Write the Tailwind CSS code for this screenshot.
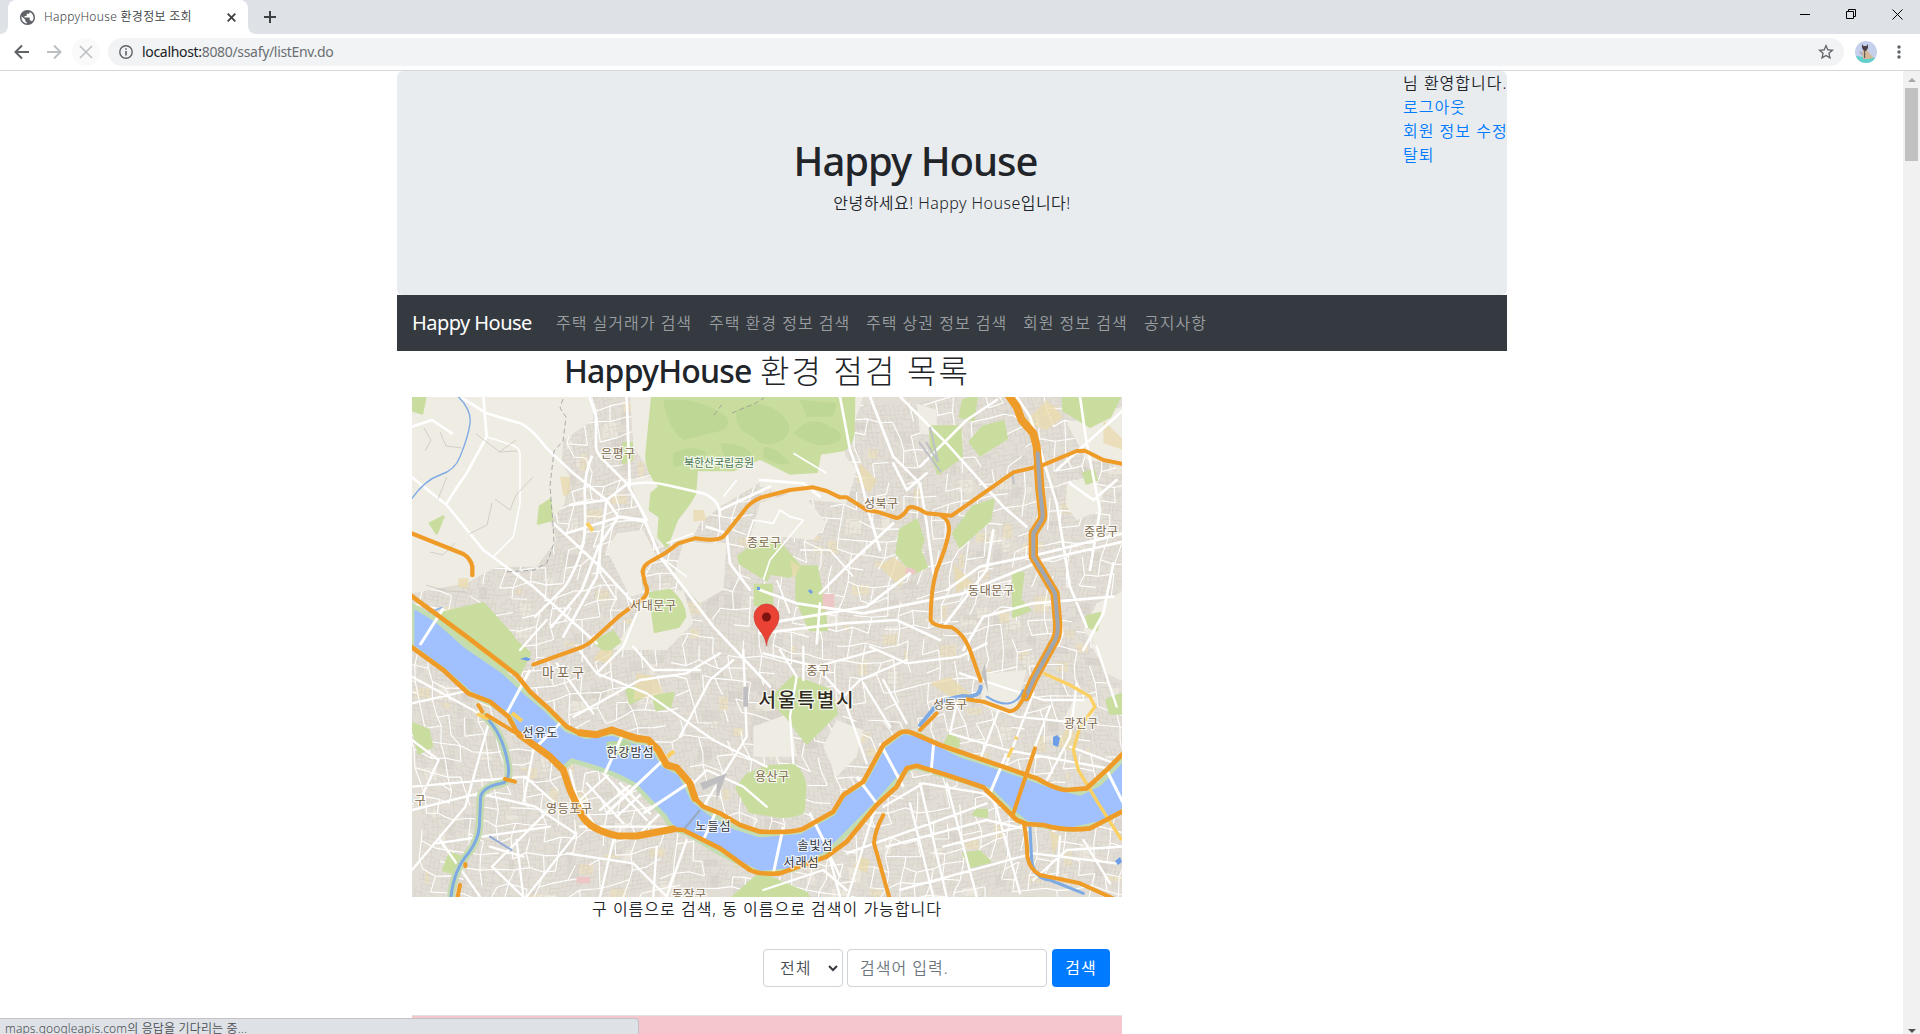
<!DOCTYPE html>
<html lang="ko">
<head>
<meta charset="utf-8">
<title>HappyHouse 환경정보 조회</title>
<script src="https://cdn.jsdelivr.net/npm/@tailwindcss/browser@4"></script>
</head>
<body class="bg-white">
<div class="h-[1034px] w-[1920px] overflow-hidden bg-white font-['Noto_Sans','Noto_Sans_CJK_KR',sans-serif] text-[#212529] flex flex-col relative">

<header class="shrink-0">
  <div class="flex h-[34px] bg-[#dee1e6]">
    <div class="relative ml-2 flex h-[34px] w-60 items-center rounded-t-lg bg-white pl-3 pr-3">
      <svg class="absolute -left-2 bottom-0" width="8" height="8"><path d="M8 0v8H0a8 8 0 0 0 8-8z" fill="#fff"/></svg>
      <svg class="absolute -right-2 bottom-0" width="8" height="8"><path d="M0 0v8h8a8 8 0 0 1-8-8z" fill="#fff"/></svg>
      <svg class="shrink-0" width="15" height="15" viewBox="2 2 20 20"><path fill="#5f6368" d="M12 2C6.48 2 2 6.48 2 12s4.48 10 10 10 10-4.48 10-10S17.52 2 12 2zm-1 17.93c-3.95-.49-7-3.85-7-7.93 0-.62.08-1.21.21-1.79L9 15v1c0 1.100.9 2 2 2v1.930zm6.900-2.540c-.26-.81-1-1.390-1.900-1.390h-1v-3c0-.55-.45-1-1-1H8v-2h2c.55 0 1-.45 1-1V7h2c1.100 0 2-.9 2-2v-.41c2.930 1.190 5 4.060 5 7.410 0 2.080-.8 3.970-2.100 5.390z"/></svg>
      <span class="ml-[9px] whitespace-nowrap text-xs font-[350] tracking-[0.3px] text-[#3c4043]">HappyHouse 환경정보 조회</span>
      <svg class="ml-auto" width="9" height="9" viewBox="0 0 9 9"><path d="M.7.7l7.600 7.600M8.300.7L.7 8.300" stroke="#3c4043" stroke-width="1.800"/></svg>
    </div>
    <svg class="ml-4 mt-[11px]" width="12" height="12"><path d="M6 0v12M0 6h12" stroke="#3c4043" stroke-width="2"/></svg>
    <div class="ml-auto mr-[17px] flex h-7 items-center gap-9">
      <svg width="10" height="10"><path d="M0 5.500h10" stroke="#000"/></svg>
      <svg width="10" height="10" fill="none" stroke="#000"><path d="M.5 2.500h7v7h-7zM2.500 2.500v-2h7v7h-2"/></svg>
      <svg width="11" height="11"><path d="M.5.5l10 10M10.500.5l-10 10" stroke="#000"/></svg>
    </div>
  </div>
  <div class="flex h-[37px] items-center border-b border-[#d5d7da] pl-[14px] pr-[19px]">
    <svg width="16" height="16" fill="none" stroke="#5f6368" stroke-width="2"><path d="M15 8H2M8 1.500L1.500 8 8 14.500"/></svg>
    <svg class="ml-4" width="16" height="16" fill="none" stroke="#bdc0c3" stroke-width="2"><path d="M1 8h13M8 1.500L14.500 8 8 14.500"/></svg>
    <div class="ml-[10px] flex size-7 items-center justify-center rounded-full bg-[#fafafb]"><svg width="14" height="14"><path d="M1 1l12 12M13 1L1 13" stroke="#bdc0c3" stroke-width="1.700"/></svg></div>
    <div class="ml-2 flex h-7 flex-1 items-center rounded-full bg-[#f1f3f4] pl-[11px] pr-[10px]">
      <svg width="14" height="14" viewBox="0 0 14 14"><circle cx="7" cy="7" r="6.200" fill="none" stroke="#5f6368" stroke-width="1.400"/><path d="M7 6v4.500M7 3.300v1.500" stroke="#5f6368" stroke-width="1.600"/></svg>
      <span class="ml-[9px] text-sm tracking-[-0.32px] text-[#6b6f73]"><span class="text-[#202124]">localhost:</span>8080/ssafy/listEnv.do</span>
      <svg class="ml-auto" width="16" height="16" viewBox="2 2 20 20"><path fill="#5f6368" d="M22 9.240l-7.190-.62L12 2 9.190 8.630 2 9.240l5.460 4.730L5.820 21 12 17.270 18.180 21l-1.630-7.030L22 9.240zM12 15.400l-3.760 2.270 1-4.280-3.320-2.880 4.380-.38L12 6.100l1.710 4.040 4.380.38-3.320 2.880 1 4.280L12 15.400z"/></svg>
    </div>
    <svg class="ml-[11px]" width="22" height="22" viewBox="0 0 22 22"><defs><clipPath id="av"><circle cx="11" cy="11" r="11"/></clipPath></defs><g clip-path="url(#av)"><path fill="#c5d0ec" d="M0 0h22v22H0z"/><path fill="#62d0cd" d="M0 15l22 2v5H0z"/><path fill="#d5b998" d="M8 8l4 1 3 4 3 3 0 1-4 1H8z"/><path fill="#b7b1bd" d="M4 10l4 1v4l-3-2z"/><path fill="#4a4248" d="M7 3l1.500 2h3L13 3v4l-2 3H9L7 7z"/><path fill="#6b5a52" d="M9 9.500h1.200V17H9z"/></g></svg>
    <svg class="ml-5" width="4" height="14" fill="#5f6368"><circle cx="2" cy="2" r="1.700"/><circle cx="2" cy="7" r="1.700"/><circle cx="2" cy="12" r="1.700"/></svg>
  </div>
</header>

<div class="flex flex-1 min-h-0">
<main class="flex-1 overflow-hidden">
  <div class="ml-[397px] w-[1110px]">
    <section class="relative h-56 rounded-md bg-[#e9ecef] pt-[66px] text-center">
      <h1 class="-ml-[73px] text-[40px] font-medium leading-[48px] tracking-[-1px]">Happy House</h1>
      <p class="mt-[6px] text-base font-[350] leading-6 tracking-[0.45px]">안녕하세요! Happy House입니다!</p>
      <div class="absolute right-0 top-0 w-[104px] whitespace-nowrap text-left font-[350] leading-6 tracking-[1px] text-[#007bff]">
        <p class="text-[#212529]">님 환영합니다.</p><p>로그아웃</p><p>회원 정보 수정</p><p>탈퇴</p>
      </div>
    </section>
    <nav class="flex h-14 items-center whitespace-nowrap bg-[#343a40] pl-[15px] font-[350] tracking-[1px] text-[#9a9da0]">
      <a class="w-36 text-xl font-normal tracking-[-0.55px] text-white">Happy House</a>
      <a class="w-[153px]">주택 실거래가 검색</a><a class="w-[157px]">주택 환경 정보 검색</a><a class="w-[157px]">주택 상권 정보 검색</a><a class="w-[121px]">회원 정보 검색</a><a>공지사항</a>
    </nav>
    <section class="ml-[15px] w-[710px]">
      <h2 class="h-[46px] whitespace-nowrap text-center text-[32px] font-medium leading-10"><span class="tracking-[-0.8px]">HappyHouse</span> <span class="font-light tracking-[2.1px]">환경 점검 목록</span></h2>
      <svg id="map" width="710" height="500" viewBox="0 0 710 500" class="block overflow-hidden font-['Noto_Sans_CJK_KR']">
        <rect width="710" height="500" fill="#e2ded5"/>
        <g id="blocks"></g>
        <path id="lanes" fill="none" stroke="#d0cbc3" stroke-width=".5"/>
        <path id="streets" fill="none" stroke="#fff" stroke-width="1.100"/>
        <!-- open land -->
        <g transform="translate(-12 -7) scale(.33333)" fill="#efece4">
          <path d="M36 20H575L580 90 490 150 485 220 510 260 490 350 450 390 470 450 410 530 290 530 200 580 36 610z"/>
          <path d="M690 20H1110V260L960 350 900 400 880 440 780 470 730 390 690 270 760 260 700 170z"/>
          <path d="M650 430L730 420 770 500 720 540 730 610 690 620 620 480zM740 610L850 600 880 700 800 780H640L700 690zM850 460L980 460 970 600 900 640 820 560z"/>
          <path d="M1070 20H1390L1330 190 1370 240 1340 340 1230 330 1080 290zM1080 340L1200 300 1280 400 1240 450 1150 440 1090 530 1040 480z"/>
          <path d="M2000 280l60-20 50 40-10 60-70 30-30-40zM2090 640l90-40v180h-80l-50-60zM1550 40l60 20v80l-50-10zM2000 100l170-50v170l-110-10z"/>
          <path d="M1760 850l120-10-30 110-60 20-50-30zM2020 930l70-10-10 60-90 10zM1310 990l80 30-20 80-60 60-40-90zM1060 1010l110-40 20 130h-130zM2070 760h110v120l-60-30z"/>
        </g>
        <!-- parks -->
        <g transform="translate(-12 -7) scale(.33333)" fill="#c9dd9f" stroke="#c9dd9f" stroke-width="8" stroke-linejoin="round">
          <path d="M757 20H1362L1360 130Q1355 165 1330 180L1260 190 1250 245 1170 250 1080 205 1000 240 890 240 885 310Q875 330 860 350L830 390 800 470 775 440 780 380 750 360 755 310 780 290Q735 240 740 190z"/>
          <path d="M1015 500l65-50 60 10 60 70-30 30-60-10-10 20-80-50zM1065 585h50v60h-50zM1190 530l60 0 20 100 10 90-50 0-40-90zM1500 420l50-30 20 60-10 30 20 50-40 20-50-60zM1590 110l90 0 5 90-70 50-20-50zM1750 110l60-15 10 50-80 50-30-40zM1720 350l60-20-10 60-90 80-20-40zM1690 30l40-10-10 70-40-10zM1990 20h170l-30 60-60 30-80-50z"/>
          <path d="M750 610l60-10Q855 640 855 680L835 710 765 725zM580 755l60-30 20 30-40 30zM420 350l30-20 5 60-40 10zM80 680l170-40 90 100-60 60-80-30zM90 400l40-20-20 50zM36 20h40l-10 50-30-10zM1840 550l30 0-10 80 30 30-50 20zM2050 250l30-10 10 30-30 10zM2060 680l40-10-10 50-25-10zM670 160l25 0v50l-25 10z"/>
          <path d="M160 700l150 20 80 70-30 60-80-20zM1180 860l110 40 20 70-90 90-60-80-50-50zM1100 1130l80-5Q1215 1150 1215 1195L1210 1265Q1190 1280 1140 1280L1050 1265 1010 1195 1040 1155zM1650 1030l25 20v20l-40-10zM36 1000l50 20 10 50-40 20zM680 900l30-10 20 30-40 20zM760 920l60-10-10 40-40 10zM150 1390l30 10-20 50-30-10zM1000 1520l80-70 140 60 20 50H960zM1690 1390l50-5 30 30-60 15zM2120 930l50-20v60h-40zM1730 1260l30 0v20l-40-5z"/>
        </g>
        <g transform="translate(-12 -7) scale(.33333)" fill="#b8d38d" opacity=".6"><path d="M790 30Q900 20 980 80 1000 120 930 130L850 150Q800 110 790 30zM1010 60q70-40 130 10 50 40 10 80-60 30-90-10-60-20-50-80zM1180 130q50-60 110-20 40 10 30 40-60 40-140-20zM820 190q60-30 100 0l-20 30-80 10zM960 160q80 0 100 40l-80 20zM1090 170q40 0 80 50-40 10-80-20zM1200 30l110 10-10 40-80 0z"/></g>
        <g transform="translate(-12 -7) scale(.33333)" fill="#e9dbae" opacity=".75">
          <path d="M480 260l30 0v50l-20 10zM880 360l30 0 10 30-40 5zM1380 220l50 50-20 40-40-40zM1870 100l70-70 50 50-50 40zM2110 90l60 60v30l-60-20zM1480 500l50 40-30 50-60-60zM1660 520l60 60-50 30zM600 780l40 0-10 40-50-10zM710 850l60 10 20 50-90 20zM175 565l30 0v30l-30-5zM1380 1400l30 10-10 40-40-20zM1950 1320l30 20-20 60zM2000 1010l30 20-20 50-40-10zM1170 510l30 20-20 40zM1590 880l60-20 70 60-40 20z"/>
        </g>
        <path transform="translate(-12 -7) scale(.33333)" fill="#edc7c6" d="M1268 612h35v48h-35zM1520 530l30 10-10 15-25-5zM530 1460l40 0v20h-40z"/>
        <!-- arterial streets -->
        <g fill="none" stroke="#fff" stroke-linejoin="round" stroke-linecap="round">
          <g transform="translate(-12 -7) scale(.33333)" stroke-width="8">
            <path d="M36 262L140 345 250 480 400 590 590 760M180 20L260 70 360 100Q390 110 440 175L520 250 620 330 655 380 735 395 780 500 940 710 1110 890M568 20l20 60 0 90Q590 195 620 220L680 280 740 390M575 200Q550 260 555 330L555 420Q550 500 495 590L405 680M655 380l-60 90-50 130-90 110M680 285Q740 270 800 285L910 310Q960 330 960 375M510 345l110-15 70-55M460 400l140 130 110 120M500 430L660 380 735 390M36 110l60-20 60 40M250 20l10 120-60 110Q170 290 140 340M620 330l-30 230-100 180M960 360l150-70M690 300l-10-280M920 410l60 20 10 90 60 80"/>
            <path d="M1320 20l30 160 30 80 30 120 30 100M1410 20l70 180 80 80 20 120 20 150M1500 20l140 140 170 190 70 60M1560 230l140-140 90-60M1850 20l40 60 80 260 40 250 50 120M2040 20l20 140 40 200-30 180M2170 60l-200 180M1080 600l110 40 200 30 300-60 240-100 260-60M1100 700l300-50 130-100M1260 640l-10 120M1080 730l250-30 160-10 130 60M1260 610l100-100 120-110M1690 780l60-100 150-40 240-20M1640 600l100-70 190-40 240-60M1780 420l-20 120-130 170M2140 520l-30 150-60 110M2010 280l70 50 70-60M1480 220l40 80 60-50M1080 270l130 10 50 40"/>
          </g>
          <g transform="translate(-12 243) scale(.33333)" stroke-width="7">
            <path d="M36 110l200 110M36 190l220-50M36 440l340-30 90 80-190 190L380 780M36 510l200-50 170 40 120 80M120 600l120 170M36 690l160-190 70-250M520 230l200-110 140-20 100-60M530 20l60 80 150 60 200 140 160 80M590 100l80-80 40-100M470 70l110 150M840 290l90-170 70-60M880 430l40-40 110 50 70 60M1030 30l10 260-130 210M350 600l20 170M270 620l100 30M360 30l80-90M110 610l340-50M640 600l-40 170M860 600l-60 170M380 770l150-190M500 640l200 30 100 100M770 620l-10 150M370 490l30-160 60-70M540 560l270 0M36 300l80 60-60 130M700 20l60 70 140 0M510 390l20 80 70 110"/>
            <path d="M600 510l170-140M650 530l140-130M560 430l110 120M610 400l130 140M660 430l90 90M540 480l90-80M720 580l60-60"/>
          </g>
          <g transform="translate(348 243) scale(.33333)" stroke-width="7">
            <path d="M60 30l50 80-20 120 10 140M10 40l160 40 180-50M170 80l80 90 70 200M240 180l60-60 140-60M310 130l80 130M330 20l110 50 160-20 80-40M350 490L260 780M370 500l120-70 180 30 40 30 250 60M260 640l420-150M380 620l300-80 130 30M420 750l400-110 250 30M480 430l80 340M560 430l90 340M700 470l80 290M590 190l-20 90 170 50 330 60M820 160l-110 290M870 200l-60 160M950 130l-20 160-90 170M720 200l-60 160M600 100l250 80 120 0M550 620l270-70M200 620l40 150M150 520l90 190M450 490l70 280M650 180l120 50 200 20M900 590l-10 140M970 600l80 130M820 720l100-90 170-10M1010 20l60 180M440 250l-70-130M10 750l180-60 70 60M930 320l160 60M130 20l0 100"/>
          </g>
        </g>
        <g transform="translate(-12 -7) scale(.33333)" fill="none" stroke="#fff" stroke-width="5" stroke-linejoin="round"><path d="M1040 450l20-60 60 10 20-40 30 20 40 10-50 60-50 60-20 60M1200 480l90 0 70 80M1180 190l100 60M1010 270l-40 50M1130 570l40 100M880 430l-80 30M260 140l60 20Q360 170 360 190V340L340 440 280 500M600 460l0 90 50 80M780 500l80 60"/></g>
        <g fill="none" stroke="#999" stroke-width=".8"><path stroke-dasharray="5 3" d="M151 2l-3 9 6 9-3 24-9 10-4 35 3 38 1 19-7 20-13 7-30 2M302 18l9-12 M320 16l24-10 8-5"/><path stroke="#c5c1b9" stroke-width=".7" d="M12 31l7 12-6 11M28 35l6 14 16 2M64 37l24 18 17-1M121 80l-17 18-6 15-15-11M80 106l-5 22-18 9M18 155l13 3 12-12M14 188l20 6 20 1M35 80l-9 22M87 55l17-12"/></g>
        <!-- streams -->
        <g transform="translate(-12 -7) scale(.33333)" fill="none" stroke="#7eaae4" stroke-linecap="round" stroke-linejoin="round"><path stroke-width="4" d="M175 20Q215 60 210 100T180 200Q165 240 120 255T36 325"/><path stroke-width="4" d="M36 685l90-32"/><path stroke="#c6dab0" stroke-width="24" d="M255 980Q310 1030 325 1130 330 1175 305 1180 250 1190 242 1220L238 1310Q235 1350 205 1390 160 1440 152 1530"/><path stroke-width="9" d="M255 980Q310 1030 325 1130 330 1175 305 1180 250 1190 242 1220L238 1310Q235 1350 205 1390 160 1440 152 1530"/><path stroke-width="6" stroke="#94abd6" d="M270 1340l65 40"/><path stroke-width="12" d="M1560 1005l50-60Q1640 925 1690 918 1740 925 1742 890"/><path stroke-width="6" d="M1760 920Q1840 970 1870 900"/><path stroke-width="9" d="M1890 1310l5 100Q1900 1465 1950 1470L2050 1510"/></g>
        <path fill="#6d9de6" d="M641 340l4-2 3 3-2 9-5-2zM703 464l5-4 2 5-4 3zM398 192l3 3-2 2-3-3zM345 190h3v3h-3zM108 262l6-2 5 2-3 2z"/>
        <!-- river -->
        <g transform="translate(-12 243) scale(.33333)" stroke-linejoin="round">
          <path id="river" fill="#a0c1fe" stroke="#c3dcb1" stroke-width="14" d="M36-105L110-60 200 20 310 95 380 160 440 210 500 270 560 290 640 280 700 305 750 310 790 375 840 400 880 480 930 520 1000 560 1080 585 1200 575 1300 520 1330 465 1390 430 1450 320 1510 275 1560 285 1680 345 1820 390 1960 440 2040 460 2100 430 2175 350V510L2100 550 2010 570 1880 550 1830 510 1770 450 1680 420 1540 380 1500 410 1430 490 1280 640 1180 690 1080 700 960 640 860 580Q810 570 795 530 775 510 705 435 640 395 515 362L490 385 450 350 350 280 330 230 270 190 210 160 130 90 36 20z"/>
          <path fill="#bad6a0" d="M620 305l60-5 20 20-20 30-60-10z"/>
          <path fill="none" stroke="#fff" stroke-width="9" d="M60 15l70-110M320 220l70-130M410 320l80-80M615 400l55-120M620 520l170-160M730 520l150-100M1120 700l30-140M1280 620l-40-80M1430 490l-60-80M1510 440l-70-130M1593 400l8-90M1770 460l50-120M910 600l40-90M2120 390l50 100"/>
          <path fill="none" stroke="#9aa9bd" stroke-width="6" d="M850 570l50-60"/>
          <path fill="#bfbfc2" d="M900 430l80-30-30 80 0-50-40 20zM1030 140h14v60h-14zM1755 70l10 90-20-60z"/>
        </g>
        <path d="M514 45l12 20-8-35M507 45l22 30M600 75l2 12" fill="none" stroke="#bfc0c6" stroke-width="2"/>
        <!-- minor expressways -->
        <g transform="translate(348 243) scale(.33333)" fill="none" stroke="#fbd063" stroke-width="10" stroke-linejoin="round"><path d="M850 100l80 35 60 35 15 30-45 60-20 70 15 60 60 100 70 110"/><path d="M758 322l-14 30M770 290l-3 8"/></g>
        <path d="M65 317l12 5M100 316l10 8M262 354l-7 6M175 126l6 8" stroke="#fbd063" stroke-width="4"/>
        <!-- expressways -->
        <g transform="translate(-12 -7) scale(.33333)" fill="none" stroke="#ef9b27" stroke-linejoin="round" stroke-linecap="round">
          <path stroke-width="13" d="M30 428L190 492Q212 505 217 530V555"/>
          <path stroke-width="12" d="M400 824L530 777Q560 770 590 740L655 680 730 625Q750 605 735 580L728 545Q730 525 750 515L795 490 835 460 885 445Q950 455 970 440L1030 365Q1050 335 1085 322L1170 300 1240 292 1280 303 1320 322 1340 322 1400 360 1430 365 1490 384Q1510 380 1525 353Q1540 345 1580 370L1655 377 1840 247 1925 227 2030 183 2055 182 2110 210 2175 223"/>
          <path stroke-width="12" d="M1625 377Q1650 390 1647 425 1640 470 1610 540 1592 600 1592 690 1600 710 1655 712 1690 730 1710 780L1742 872"/>
          <path stroke-width="24" d="M1825 15L1850 50 1865 90 1900 130 1910 170 1915 230"/><path stroke="#e0a24a" stroke-width="2" d="M1850 50l20 45 35 40 8 95"/>
          <path stroke-width="28" d="M1915 225L1920 300 1928 370Q1928 385 1925 390L1900 430V500L1930 550 1965 610 1973 700Q1975 740 1960 760L1900 870 1878 920"/>
          <path stroke-width="12" stroke="#9fa7b3" d="M1913 190L1920 300 1928 370Q1928 385 1925 390L1900 430V500L1930 550 1965 610 1973 700Q1975 740 1960 760L1900 870 1878 920"/>
          <path stroke-width="12" d="M1875 915Q1850 970 1825 963L1750 935 1700 928M1610 970l-50 50"/>
        </g>
        <g transform="translate(-12 243) scale(.33333)" fill="none" stroke="#ef9b27" stroke-linejoin="round" stroke-linecap="round">
          <path stroke-width="14" d="M30-135L200-10 350 105 390 155 440 200 500 260 540 280Q600 290 635 267L710 295 745 300 775 330 800 375 830 383 870 430 885 475 910 500 960 520 1020 555 1080 575Q1200 580 1220 560L1300 515 1330 465 1390 425 1450 315 1500 278Q1520 270 1540 280L1620 315 1780 370 1910 415Q1970 450 2000 450L2060 445 2120 390 2175 335"/>
          <path stroke-width="14" d="M30 18L130 90 205 160 270 185 325 230 350 275 440 340 490 390 510 450 540 520Q560 560 650 587L710 588 810 567 850 570 960 625 1050 690Q1080 705 1140 700L1280 650 1340 605 1430 495 1490 440 1520 385 1550 377 1640 405 1750 442 1800 490 1850 540 1880 552 1930 555Q2000 575 2070 565L2175 510"/>
          <path stroke-width="21" d="M360 285l90 65 40 40 20 60 35 75Q570 570 650 587L710 588 820 567M540 278l50 6 45-14 75 25 35 5 30 30 25 45 30 8 40 47 15 45"/>
          <path stroke-width="12" d="M260 225l90 55M235 195l12 20M315 417l30 8M196 672v7M180 735l-10 50M1450 525Q1425 570 1422 610L1470 780M1905 325L1840 520M1872 550Q1882 610 1882 650 1890 690 1920 705L2040 730 2150 780"/>
        </g>
        <g fill="#7b674b" stroke="#fff" stroke-width="2.500" stroke-opacity=".8" paint-order="stroke" font-size="12" text-anchor="middle">
          <text x="206" y="61" textLength="34">은평구</text><text x="307" y="70" font-size="11" textLength="70" fill="#4b7a54">북한산국립공원</text><text x="469" y="111" textLength="34">성북구</text><text x="352" y="150" textLength="34">종로구</text><text x="689" y="139" textLength="34">중랑구</text><text x="241" y="213" textLength="46">서대문구</text><text x="579" y="198" textLength="46">동대문구</text><text x="151" y="280" font-size="13" textLength="42">마포구</text><text x="406" y="278" textLength="23">중구</text><text x="538" y="312" textLength="34">성동구</text><text x="669" y="331" textLength="34">광진구</text><text x="360" y="384" textLength="34">용산구</text><text x="157" y="416" textLength="46">영등포구</text><text x="2" y="408" textLength="23">인구</text><text x="277" y="502" textLength="34">동작구</text>
          <g fill="#36373b"><text x="128" y="340" textLength="35">선유도</text><text x="218" y="360" textLength="47">한강밤섬</text><text x="307" y="434" text-anchor="middle" textLength="35" dx="-6">노들섬</text><text x="403" y="453" textLength="35">솔빛섬</text><text x="389" y="470" textLength="35">서래섬</text></g>
          <text x="394" y="310" font-size="19" font-weight="500" fill="#2f2a20" textLength="95">서울특별시</text>
        </g>
        <path d="M354.500 249c-1-14-12.500-17-12.500-29.500a12.500 12.500 0 0 1 25 0c0 12.500-11.500 15.500-12.500 29.500z" fill="#ea4335" stroke="#c5372b" stroke-width=".6"/><circle cx="354.500" cy="220" r="4.500" fill="#7d1410"/>
      </svg>
      <p class="h-6 whitespace-nowrap text-center font-[350] leading-6 tracking-[1px]">구 이름으로 검색, 동 이름으로 검색이 가능합니다</p>
      <form class="mt-7 flex h-[38px] justify-end gap-1 pr-3 font-[350] tracking-[1px]">
        <div class="flex w-20 items-center justify-between rounded border border-[#ced4da] pl-4 pr-1 text-[#495057]">전체<svg width="10" height="7" fill="none" stroke="#343a40" stroke-width="2"><path d="M1 1l4 4 4-4"/></svg></div>
        <div class="flex w-[200px] items-center rounded border border-[#ced4da] px-3 text-[#6c757d]">검색어 입력.</div>
        <div class="ml-px flex w-[58px] items-center justify-center rounded bg-[#007bff] font-normal text-white">검색</div>
      </form>
      <div class="mt-7 h-12 border-t border-[#dee2e6] bg-[#f5c6cb] pl-[222px] pt-[14px] font-bold"><span class="tracking-[3px]">구 동</span></div>
    </section>
  </div>
</main>
<aside class="flex w-[17px] flex-col items-center bg-[#f1f1f1]">
  <svg class="mt-[7px] shrink-0" width="8" height="4"><path d="M0 4l4-4 4 4z" fill="#a3a3a3"/></svg>
  <div class="mt-[6px] h-[73px] w-[13px] shrink-0 bg-[#c1c1c1]"></div>
  <svg class="mb-[1px] mt-auto shrink-0" width="8" height="4"><path d="M0 0l4 4 4-4z" fill="#505050"/></svg>
</aside>
</div>

<div class="absolute left-0 top-[1018px] h-5 w-[639px] rounded-tr border-r border-t border-[#c5c0c6] bg-[#dee1e6] pl-[5px] text-xs font-[350] leading-[20px] tracking-[0.15px] text-[#4a4e53]">maps.googleapis.com의 응답을 기다리는 중...</div>
</div>

<script>
  // Fill the city area with a reproducible network of small streets
  let seed = 7;
  const rnd = () => (seed = (seed * 16807) % 2147483647) / 2147483647;
  function network(step, jitter, keep) {
    const cols = Math.ceil(710 / step) + 2, rows = Math.ceil(500 / step) + 2, pts = [];
    for (let r = 0; r < rows; r++) for (let c = 0; c < cols; c++) {
      const x = c * step, y = r * step;
      pts.push([x + Math.sin(y / 55) * 12 + (rnd() - .5) * jitter, y + Math.sin(x / 60) * 14 + (rnd() - .5) * jitter - 5]);
    }
    let d = '';
    for (let r = 0; r < rows - 1; r++) for (let c = 0; c < cols - 1; c++) {
      const p = pts[r * cols + c];
      for (const q of [pts[r * cols + c + 1], pts[(r + 1) * cols + c]])
        if (rnd() < keep) d += `M${p[0].toFixed(1)} ${p[1].toFixed(1)}L${q[0].toFixed(1)} ${q[1].toFixed(1)}`;
    }
    return d;
  }
  document.getElementById('lanes').setAttribute('d', network(4.5, 2, .6));
  document.getElementById('streets').setAttribute('d', network(15, 7, .55));
  let b = '';
  for (let i = 0; i < 420; i++)
    b += `<rect x="${(rnd() * 710).toFixed(0)}" y="${(rnd() * 500).toFixed(0)}" width="${(4 + rnd() * 14).toFixed(0)}" height="${(4 + rnd() * 12).toFixed(0)}" fill="${['#dad5cd', '#ebe6dc', '#e9dfc4', '#dcd8d0'][i % 4]}"/>`;
  document.getElementById('blocks').innerHTML = b;
</script>
</body>
</html>
